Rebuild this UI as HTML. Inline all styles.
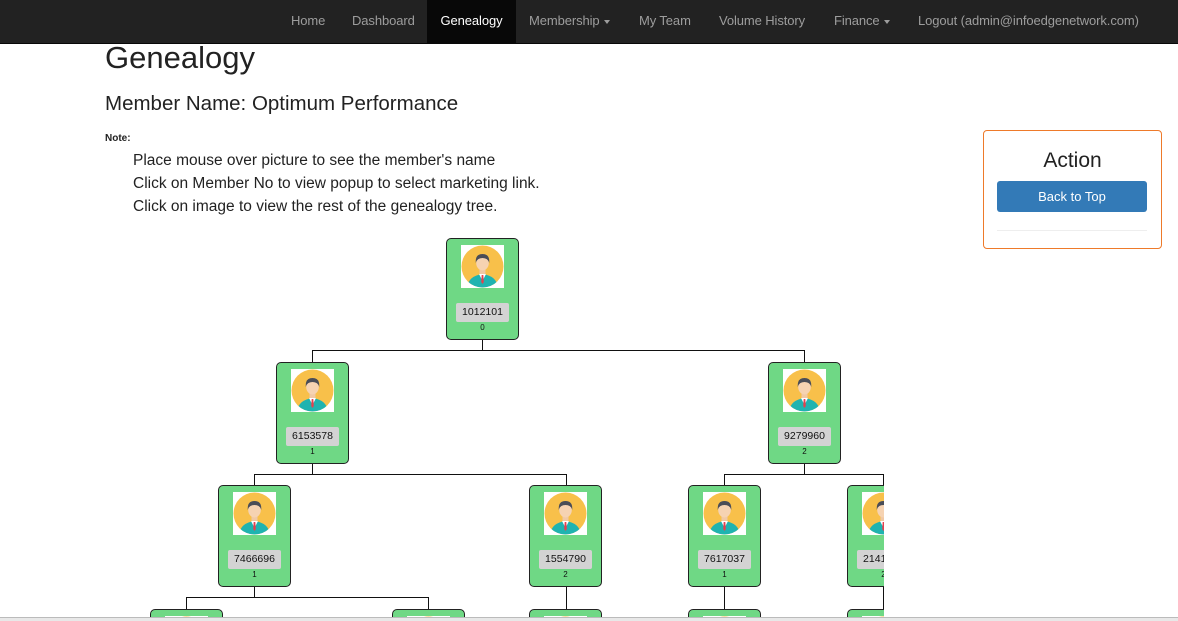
<!DOCTYPE html>
<html><head><meta charset="utf-8"><style>
*{box-sizing:border-box}
html,body{overflow:hidden}
body{margin:0;width:1178px;height:621px;overflow:hidden;background:#fff;font-family:"Liberation Sans",sans-serif;color:#333;position:relative}
.nav{position:absolute;left:0;top:0;width:1178px;height:44px;background:#222;border-bottom:1px solid #080808}
.nav span{position:absolute;top:0;height:44px;line-height:41px;font-size:13px;color:#9d9d9d;letter-spacing:-0.1px}
.nav .act{background:#080808;color:#fff;text-align:center}
.caret{display:inline-block;width:0;height:0;border-top:4px solid #9d9d9d;border-left:3px solid transparent;border-right:3px solid transparent;vertical-align:middle;margin-left:4px}
h1{position:absolute;left:105px;top:40px;margin:0;font-weight:normal;font-size:31px;color:#222}
h3{position:absolute;left:105px;top:92px;margin:0;font-weight:normal;font-size:20.5px;color:#222}
.note{position:absolute;left:105px;top:133px;font-size:10px;font-weight:bold;color:#222}
.lines{position:absolute;left:133px;top:149px;font-size:15.5px;line-height:23px;color:#222}
.panel{position:absolute;left:983px;top:130px;width:179px;height:119px;border:1px solid #ee7a2a;border-radius:4px;background:#fff}
.panel .t{position:absolute;top:18px;width:100%;text-align:center;font-size:21px;color:#222}
.btn{position:absolute;left:13px;top:50px;width:150px;height:31px;background:#337ab7;border-radius:3px;color:#fff;font-size:13px;text-align:center;line-height:31px}
.panel .hr{position:absolute;left:13px;top:99px;width:150px;border-top:1px solid #eee}
.tree{position:absolute;left:0;top:0;width:884px;height:617px;overflow:hidden}
.n{position:absolute;width:73px;height:102px;background:#6fd885;border:1px solid #222;border-radius:5px}
.n svg{position:absolute;left:14px;top:6px}
.n .l{position:absolute;left:9px;top:64px;width:53px;height:19px;background:#d3d3d3;border-radius:2px;font-size:10.5px;line-height:19px;text-align:center;color:#111}
.n .s{position:absolute;left:0;top:84px;width:100%;text-align:center;font-size:8px;color:#111}
.h{position:absolute;height:1px;background:#111}
.v{position:absolute;width:1px;background:#111}
.bar{position:absolute;left:0;top:617px;width:1178px;height:4px;background:#e8e8e8;border-top:1px solid #bbb}
</style></head><body>
<div class="nav">
<span style="left:291px">Home</span>
<span style="left:352px">Dashboard</span>
<span class="act" style="left:427px;width:89px">Genealogy</span>
<span style="left:529px">Membership<i class="caret"></i></span>
<span style="left:639px">My Team</span>
<span style="left:719px">Volume History</span>
<span style="left:834px">Finance<i class="caret"></i></span>
<span style="left:918px">Logout (admin@infoedgenetwork.com)</span>
</div>
<h1>Genealogy</h1>
<h3>Member Name: Optimum Performance</h3>
<div class="note">Note:</div>
<div class="lines">Place mouse over picture to see the member's name<br>Click on Member No to view popup to select marketing link.<br>Click on image to view the rest of the genealogy tree.</div>
<div class="panel"><div class="t">Action</div><div class="btn">Back to Top</div><div class="hr"></div></div>
<svg width="0" height="0" style="position:absolute;left:0;top:0"><defs><symbol id="av" viewBox="0 0 43 43"><rect width="43" height="43" fill="#fff"/><circle cx="21.5" cy="21.5" r="21" fill="#f8c04a"/><clipPath id="cc"><circle cx="21.5" cy="21.5" r="21"/></clipPath><g clip-path="url(#cc)"><path d="M6 43 Q7 31 21.5 29 Q36 31 37 43Z" fill="#1fb3b0"/><path d="M18 29 L21.5 36 L25 29Z" fill="#fff"/><path d="M20.7 30 L22.3 30 L22.8 37 L21.5 39 L20.2 37Z" fill="#e5404f"/><rect x="18.5" y="23" width="6" height="6" fill="#f1c9a5"/><ellipse cx="21.5" cy="18" rx="6.3" ry="7.5" fill="#f6d3b2"/><path d="M14.8 18 Q14 9 21.5 9 Q29 9 28.2 18 Q27 13 21.5 13 Q16 13 14.8 18Z" fill="#4a4d57"/></g></symbol></defs></svg>
<div class="tree">
<div class="v" style="left:482px;top:339px;height:11px"></div>
<div class="h" style="left:312px;top:350px;width:493px"></div>
<div class="v" style="left:312px;top:350px;height:12px"></div>
<div class="v" style="left:804px;top:350px;height:12px"></div>
<div class="v" style="left:312px;top:463px;height:11px"></div>
<div class="v" style="left:804px;top:463px;height:11px"></div>
<div class="h" style="left:254px;top:474px;width:313px"></div>
<div class="h" style="left:724px;top:474px;width:200px"></div>
<div class="v" style="left:254px;top:474px;height:11px"></div>
<div class="v" style="left:566px;top:474px;height:11px"></div>
<div class="v" style="left:724px;top:474px;height:11px"></div>
<div class="v" style="left:883px;top:474px;height:11px"></div>
<div class="v" style="left:254px;top:586px;height:11px"></div>
<div class="h" style="left:186px;top:597px;width:243px"></div>
<div class="v" style="left:186px;top:597px;height:12px"></div>
<div class="v" style="left:428px;top:597px;height:12px"></div>
<div class="v" style="left:566px;top:586px;height:23px"></div>
<div class="v" style="left:724px;top:586px;height:23px"></div>
<div class="v" style="left:883px;top:586px;height:23px"></div>
<div class="n" style="left:446px;top:238px"><svg width="43" height="43"><use href="#av"/></svg><div class="l">1012101</div><div class="s">0</div></div>
<div class="n" style="left:276px;top:362px"><svg width="43" height="43"><use href="#av"/></svg><div class="l">6153578</div><div class="s">1</div></div>
<div class="n" style="left:768px;top:362px"><svg width="43" height="43"><use href="#av"/></svg><div class="l">9279960</div><div class="s">2</div></div>
<div class="n" style="left:218px;top:485px"><svg width="43" height="43"><use href="#av"/></svg><div class="l">7466696</div><div class="s">1</div></div>
<div class="n" style="left:529px;top:485px"><svg width="43" height="43"><use href="#av"/></svg><div class="l">1554790</div><div class="s">2</div></div>
<div class="n" style="left:688px;top:485px"><svg width="43" height="43"><use href="#av"/></svg><div class="l">7617037</div><div class="s">1</div></div>
<div class="n" style="left:847px;top:485px"><svg width="43" height="43"><use href="#av"/></svg><div class="l">2141000</div><div class="s">2</div></div>
<div class="n" style="left:150px;top:609px"><svg width="43" height="43"><use href="#av"/></svg></div>
<div class="n" style="left:392px;top:609px"><svg width="43" height="43"><use href="#av"/></svg></div>
<div class="n" style="left:529px;top:609px"><svg width="43" height="43"><use href="#av"/></svg></div>
<div class="n" style="left:688px;top:609px"><svg width="43" height="43"><use href="#av"/></svg></div>
<div class="n" style="left:847px;top:609px"><svg width="43" height="43"><use href="#av"/></svg></div>
</div>
<div class="bar"></div>
</body></html>
